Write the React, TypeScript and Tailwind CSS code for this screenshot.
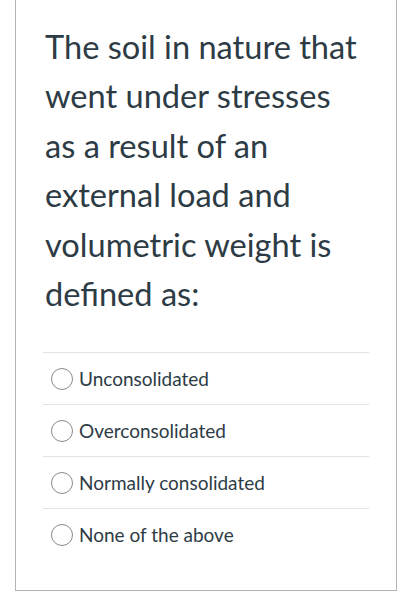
const options = [
  "Unconsolidated",
  "Overconsolidated",
  "Normally consolidated",
  "None of the above",
];

export default function App() {
  return (
    <div
      className="w-[410px] h-[593px] bg-white overflow-hidden"
      style={{ fontFamily: "Lato, 'Open Sans', sans-serif" }}
    >
      <div className="ml-[15px] w-[382px] h-[591px] border-x border-b border-[#b4b4b4] pt-[22px]">
        <h1 className="ml-[29px] w-[317px] text-[32.6px] leading-[49.4px] font-normal text-[#2d3b45]">
          The soil in nature that went under stresses as a result of an
          external load and volumetric weight is defined as:
        </h1>
        <div className="mt-[34px] ml-[27px] w-[326px]">
          {options.map((opt) => (
            <label
              key={opt}
              className="flex items-center h-[52px] border-t border-[#e3e3e3]"
            >
              <span className="ml-[8px] w-[22px] h-[22px] rounded-full border-[1.5px] border-[#8a8a8a] bg-white shrink-0" />
              <span className="ml-[6px] text-[19px] text-[#2d3b45] leading-none">
                {opt}
              </span>
            </label>
          ))}
        </div>
      </div>
    </div>
  );
}
